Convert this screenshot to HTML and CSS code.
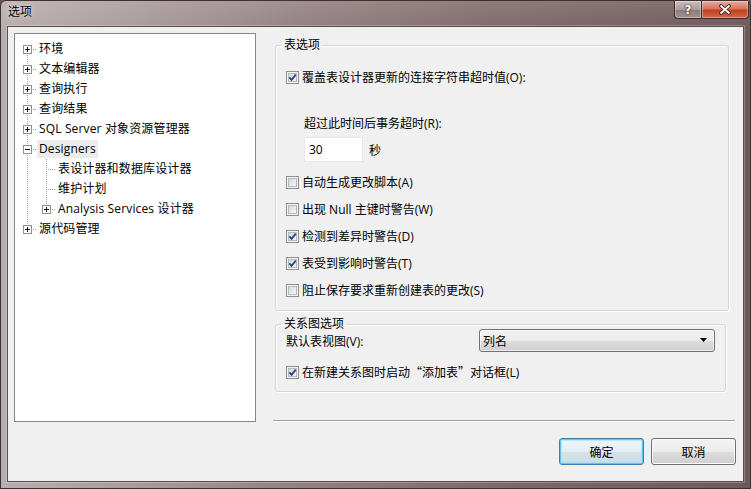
FILE: index.html
```html
<!DOCTYPE html>
<html lang="zh-CN">
<head>
<meta charset="utf-8">
<title>选项</title>
<link rel="stylesheet" href="styles.css">
</head>
<body>
<div class="window">
  <div class="titlebar">
    <span class="title">选项</span>
    <div class="caption-btns">
      <div class="cap help">?</div>
      <div class="cap close">
        <svg width="14" height="11" viewBox="0 0 14 11"><path d="M3 2 L11 9 M11 2 L3 9" stroke="#3a2020" stroke-width="3.6" stroke-linecap="round"/><path d="M3 2 L11 9 M11 2 L3 9" stroke="#ffffff" stroke-width="1.8" stroke-linecap="round"/></svg>
      </div>
    </div>
  </div>
  <div class="content">
    <div class="main">
      <div class="tree">
        <div class="row"><span class="c first"><svg class="exp" width="9" height="9" viewBox="0 0 9 9"><rect x=".5" y=".5" width="8" height="8" fill="#fff" stroke="#919191"/><path d="M2 4.5h5M4.5 2v5" stroke="#1a1a1a"/></svg></span><span class="lbl">环境</span></div>
        <div class="row"><span class="c mid"><svg class="exp" width="9" height="9" viewBox="0 0 9 9"><rect x=".5" y=".5" width="8" height="8" fill="#fff" stroke="#919191"/><path d="M2 4.5h5M4.5 2v5" stroke="#1a1a1a"/></svg></span><span class="lbl">文本编辑器</span></div>
        <div class="row"><span class="c mid"><svg class="exp" width="9" height="9" viewBox="0 0 9 9"><rect x=".5" y=".5" width="8" height="8" fill="#fff" stroke="#919191"/><path d="M2 4.5h5M4.5 2v5" stroke="#1a1a1a"/></svg></span><span class="lbl">查询执行</span></div>
        <div class="row"><span class="c mid"><svg class="exp" width="9" height="9" viewBox="0 0 9 9"><rect x=".5" y=".5" width="8" height="8" fill="#fff" stroke="#919191"/><path d="M2 4.5h5M4.5 2v5" stroke="#1a1a1a"/></svg></span><span class="lbl">查询结果</span></div>
        <div class="row"><span class="c mid"><svg class="exp" width="9" height="9" viewBox="0 0 9 9"><rect x=".5" y=".5" width="8" height="8" fill="#fff" stroke="#919191"/><path d="M2 4.5h5M4.5 2v5" stroke="#1a1a1a"/></svg></span><span class="lbl">SQL Server 对象资源管理器</span></div>
        <div class="row"><span class="c mid"><svg class="exp" width="9" height="9" viewBox="0 0 9 9"><rect x=".5" y=".5" width="8" height="8" fill="#fff" stroke="#919191"/><path d="M2 4.5h5" stroke="#1a1a1a"/></svg></span><span class="lbl sel">Designers</span></div>
        <div class="row"><span class="c pass"></span><span class="c mid"></span><span class="lbl">表设计器和数据库设计器</span></div>
        <div class="row"><span class="c pass"></span><span class="c mid"></span><span class="lbl">维护计划</span></div>
        <div class="row"><span class="c pass"></span><span class="c last"><svg class="exp" width="9" height="9" viewBox="0 0 9 9"><rect x=".5" y=".5" width="8" height="8" fill="#fff" stroke="#919191"/><path d="M2 4.5h5M4.5 2v5" stroke="#1a1a1a"/></svg></span><span class="lbl">Analysis Services 设计器</span></div>
        <div class="row"><span class="c last"><svg class="exp" width="9" height="9" viewBox="0 0 9 9"><rect x=".5" y=".5" width="8" height="8" fill="#fff" stroke="#919191"/><path d="M2 4.5h5M4.5 2v5" stroke="#1a1a1a"/></svg></span><span class="lbl">源代码管理</span></div>
      </div>
      <div class="right">
        <fieldset class="group g1">
          <legend>表选项</legend>
          <div class="cbrow"><span class="cb"><span class="cbin"><svg width="9" height="9" viewBox="0 0 9 9"><path d="M1.3 4.4 L3.6 6.9 L7.8 1.6" fill="none" stroke="#2a4583" stroke-width="1.7"/></svg></span></span><span>覆盖表设计器更新的连接字符串超时值(O):</span></div>
          <div class="sublabel">超过此时间后事务超时(R):</div>
          <div class="inputrow"><div class="input">30</div><span class="unit">秒</span></div>
          <div class="cblist">
            <div class="cbrow"><span class="cb"><span class="cbin"></span></span><span>自动生成更改脚本(A)</span></div>
            <div class="cbrow"><span class="cb"><span class="cbin"></span></span><span>出现 Null 主键时警告(W)</span></div>
            <div class="cbrow"><span class="cb"><span class="cbin"><svg width="9" height="9" viewBox="0 0 9 9"><path d="M1.3 4.4 L3.6 6.9 L7.8 1.6" fill="none" stroke="#2a4583" stroke-width="1.7"/></svg></span></span><span>检测到差异时警告(D)</span></div>
            <div class="cbrow"><span class="cb"><span class="cbin"><svg width="9" height="9" viewBox="0 0 9 9"><path d="M1.3 4.4 L3.6 6.9 L7.8 1.6" fill="none" stroke="#2a4583" stroke-width="1.7"/></svg></span></span><span>表受到影响时警告(T)</span></div>
            <div class="cbrow"><span class="cb"><span class="cbin"></span></span><span>阻止保存要求重新创建表的更改(S)</span></div>
          </div>
        </fieldset>
        <fieldset class="group g2">
          <legend>关系图选项</legend>
          <div class="selrow">
            <span class="sellabel">默认表视图(V):</span>
            <div class="combo"><span>列名</span><svg width="8" height="5" viewBox="0 0 8 5"><path d="M0 0 H7 L3.5 4 Z" fill="#000"/></svg></div>
          </div>
          <div class="cbrow last-cb"><span class="cb"><span class="cbin"><svg width="9" height="9" viewBox="0 0 9 9"><path d="M1.3 4.4 L3.6 6.9 L7.8 1.6" fill="none" stroke="#2a4583" stroke-width="1.7"/></svg></span></span><span>在新建关系图时启动<span class="q">“</span>添加表<span class="q">”</span>对话框(L)</span></div>
        </fieldset>
        <div class="sep"></div>
      </div>
    </div>
    <div class="buttons">
      <button class="btn default">确定</button>
      <button class="btn">取消</button>
    </div>
  </div>
</div>
</body>
</html>
```

FILE: styles.css
```css
* { box-sizing: border-box; }
html, body { margin: 0; padding: 0; }
body {
  width: 751px;
  height: 489px;
  overflow: hidden;
  background: #6a5557;
  font-family: "Open Sans", "Noto Sans CJK SC", sans-serif;
  font-size: 12px;
  color: #000;
}
.window {
  --dv: repeating-linear-gradient(to bottom, #a0a0a0 0 1px, transparent 1px 2px);
  --dh: repeating-linear-gradient(to right, #a0a0a0 0 1px, transparent 1px 2px);
  width: 751px;
  height: 489px;
  border: 1px solid #3e3031;
  border-radius: 6px 6px 0 0;
  background:
    linear-gradient(to bottom, rgba(255,255,255,0.12), rgba(255,255,255,0) 30px),
    linear-gradient(90deg, #b9aeaf 0%, #a99b9c 18%, #938081 40%, #7f6a6b 65%, #6e5859 100%);
  display: flex;
  flex-direction: column;
}
.titlebar {
  height: 25px;
  display: flex;
  justify-content: space-between;
  align-items: flex-start;
  flex: none;
}
.title {
  padding: 4px 0 0 7px;
  line-height: 14px;
  text-shadow: 0 0 6px rgba(255,255,255,0.7), 0 0 2px rgba(255,255,255,0.5);
}
.caption-btns {
  display: flex;
  margin-right: 1px;
}
.cap {
  height: 18px;
  border: 1px solid #3b2b2c;
  border-top: none;
  display: flex;
  align-items: center;
  justify-content: center;
  color: #fff;
  box-shadow: inset 0 0 0 1px rgba(255,255,255,0.35);
}
.help {
  width: 28px;
  border-radius: 0 0 0 4px;
  background: linear-gradient(to bottom, #cdc1c1 0%, #ab9a9a 50%, #8f7a7b 51%, #a28f8f 100%);
  font-family: "DejaVu Sans", sans-serif;
  font-weight: bold;
  font-size: 12px;
  text-shadow: 0 0 2px #2a1a1a, 0 0 1px #2a1a1a;
}
.close {
  width: 48px;
  margin-left: -1px;
  border-radius: 0 0 4px 0;
  background: linear-gradient(to bottom, #e9ab9e 0%, #d87460 45%, #c2401f 55%, #d4654a 100%);
}
.content {
  flex: 1;
  margin: 0 6px 6px;
  border: 1px solid #5a4c4d;
  box-shadow: 0 0 0 1px rgba(255,255,255,0.25);
  background: #f0f0f0;
  padding: 6px 7px 16px 6px;
  display: flex;
  flex-direction: column;
}
.main {
  display: flex;
  gap: 17px;
  height: 389px;
}
.tree {
  width: 242px;
  height: 389px;
  background: #fff;
  border: 1px solid #828790;
  padding: 5px 0 0 3px;
}
.row {
  display: flex;
  height: 20px;
  align-items: center;
  line-height: 20px;
  white-space: nowrap;
}
.c {
  width: 19px;
  height: 20px;
  flex: none;
  display: flex;
  align-items: center;
  justify-content: center;
}
.c.first {
  background: var(--dv) 9px 10px / 1px 10px no-repeat, var(--dh) 9px 10px / 10px 1px no-repeat;
}
.c.mid {
  background: var(--dv) 9px 0 / 1px 20px no-repeat, var(--dh) 9px 10px / 10px 1px no-repeat;
}
.c.last {
  background: var(--dv) 9px 0 / 1px 10px no-repeat, var(--dh) 9px 10px / 10px 1px no-repeat;
}
.c.pass {
  background: var(--dv) 9px 0 / 1px 20px no-repeat;
}
.exp { display: block; }
.lbl {
  padding: 0 2px;
  line-height: 18px;
  letter-spacing: 0.15px;
}
.lbl.sel { background: #ececec; }

.right {
  width: 462px;
  display: flex;
  flex-direction: column;
}
.group {
  margin: 0 0 0 2px;
  border: 1px solid #d5d5d5;
  border-radius: 3px;
  box-shadow: inset 1px 1px 0 #fff, 1px 1px 0 #fff;
  min-width: 0;
}
.group legend {
  margin-left: -4px;
  padding: 0 2px;
  line-height: 14px;
}
.g1 {
  width: 454px;
  margin-top: 5px;
  padding: 15px 10px 10px 10px;
}
.g2 {
  width: 451px;
  margin-top: 6px;
  padding: 0 10px 9px 10px;
}
.cbrow {
  display: flex;
  align-items: center;
  gap: 3px;
  height: 20px;
  white-space: nowrap;
}
.cb {
  width: 13px;
  height: 13px;
  border: 1px solid #8e8f8f;
  background: #f4f4f4;
  padding: 1px;
  flex: none;
}
.cbin {
  display: block;
  width: 9px;
  height: 9px;
  background: linear-gradient(135deg, #cfd3d8 0%, #e8eaec 55%, #f7f7f7 100%);
  box-shadow: inset 0 0 0 1px #b6bbc0;
}
.cbin svg { display: block; }
.q { font-family: "Noto Sans CJK SC", sans-serif; }
.sublabel {
  margin: 27px 0 0 18px;
  height: 20px;
  line-height: 20px;
}
.inputrow {
  margin: 3px 0 0 18px;
  display: flex;
  align-items: center;
  gap: 6px;
}
.input {
  width: 59px;
  height: 25px;
  background: #fff;
  border: 1px solid #e6e6e6;
  padding-left: 4px;
  line-height: 23px;
}
.cblist {
  margin-top: 10px;
  display: flex;
  flex-direction: column;
  gap: 7px;
}
.selrow {
  display: flex;
  align-items: center;
  margin-top: -2px;
  height: 23px;
}
.sellabel {
  width: 193px;
  flex: none;
}
.combo {
  width: 237px;
  height: 23px;
  border: 1px solid #707070;
  border-radius: 3px;
  background: linear-gradient(to bottom, #f2f2f2 0%, #ebebeb 50%, #dddddd 51%, #cfcfcf 100%);
  box-shadow: inset 0 0 0 1px rgba(255,255,255,0.6);
  display: flex;
  align-items: center;
  justify-content: space-between;
  padding: 0 6px 0 3px;
}
.combo svg { display: block; }
.last-cb { margin-top: 10px; }
.sep {
  margin-top: auto;
  height: 2px;
  border-top: 1px solid #a0a0a0;
  border-bottom: 1px solid #fff;
}
.buttons {
  margin-top: 16px;
  display: flex;
  justify-content: flex-end;
  gap: 7px;
}
.btn {
  width: 85px;
  height: 27px;
  font: inherit;
  color: #000;
  border: 1px solid #707070;
  border-radius: 3px;
  background: linear-gradient(to bottom, #f2f2f2 0%, #ebebeb 50%, #dddddd 51%, #cfcfcf 100%);
  box-shadow: inset 0 0 0 1px #fbfbfb;
  padding: 0;
}
.btn.default {
  border-color: #3c7fb1;
  background: linear-gradient(to bottom, #eef6fa 0%, #e4eef3 50%, #d6e3ea 51%, #cbdbe3 100%);
  box-shadow: inset 0 0 0 1px #62c6ec, inset 0 0 0 2px rgba(160,225,250,0.6);
}
```
